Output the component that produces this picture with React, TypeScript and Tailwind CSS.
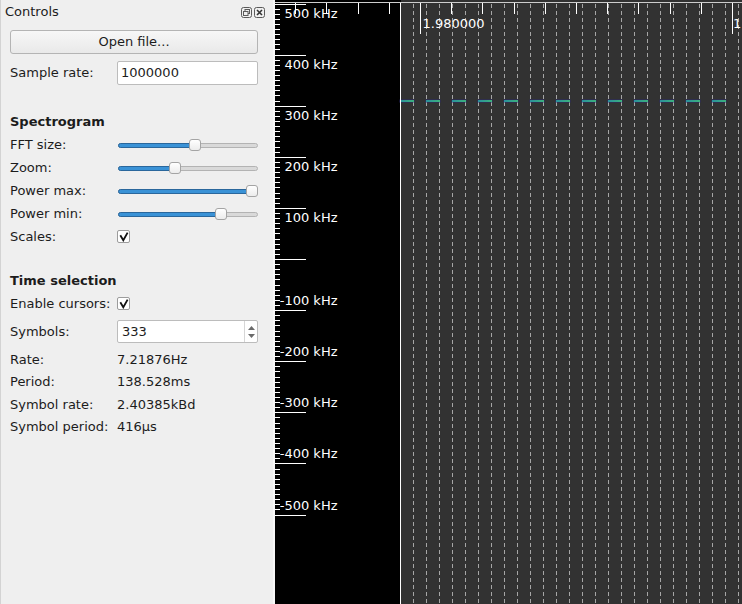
import React from 'react';

// handle centre in px, measured from the left end of the groove
const Slider: React.FC<{ value: number }> = ({ value }) => (
  <div className="relative ml-[1px] h-[12px] w-[140px]">
    <div className="absolute left-0 right-0 top-[4px] h-[5px] rounded-full border border-[#b3b3b3] bg-[#d9d9d9]" />
    <div
      className="absolute left-0 top-[4px] h-[5px] rounded-full border border-[#2a679c] bg-[#3a92d6]"
      style={{ width: value }}
    />
    <div
      className="absolute top-0 h-[12px] w-[12px] rounded-[3px] border border-[#a4a4a4] bg-linear-to-b from-white to-[#ececec]"
      style={{ left: value - 6 }}
    />
  </div>
);

const CheckBox = () => (
  <div className="flex h-[13px] w-[13px] items-center justify-center rounded-[2px] border border-[#9c9c9c] bg-white">
    <svg width="11" height="11" viewBox="0 0 11 11">
      <path d="M2.3 4.2 L5.3 9.3 L9.6 1.6" fill="none" stroke="#111" strokeWidth="1.8" />
    </svg>
  </div>
);

const Row: React.FC<{ label: string; className?: string; children?: React.ReactNode }> = ({
  label,
  className = 'h-[23px]',
  children
}) => (
  <div className={`flex items-center ${className}`}>
    <div className="w-[107px] shrink-0">{label}</div>
    {children}
  </div>
);

const ControlsPanel = () => (
  <div className="flex h-full w-[275px] shrink-0 flex-col border-l border-r-2 border-l-[#d3d3d3] border-r-[#f8f8f8] bg-[#efefef] pl-[9px]">
    <div className="-ml-[5px] flex h-[24px] items-center justify-between pr-[8px]">
      <span>Controls</span>
      <div className="flex gap-[2px]">
        <svg width="11" height="11" viewBox="0 0 11 11">
          <rect x="0.5" y="0.5" width="10" height="10" rx="2" fill="none" stroke="#5a5a5a" />
          <rect x="4" y="2.5" width="4.5" height="4" fill="none" stroke="#5a5a5a" />
          <rect x="2.5" y="4.5" width="4.5" height="4" fill="#efefef" stroke="#5a5a5a" />
        </svg>
        <svg width="11" height="11" viewBox="0 0 11 11">
          <rect x="0.5" y="0.5" width="10" height="10" rx="2" fill="none" stroke="#5a5a5a" />
          <path d="M3 3 L8 8 M8 3 L3 8" stroke="#333" strokeWidth="1.6" />
        </svg>
      </div>
    </div>

    <button className="mt-[6px] h-[24px] w-[248px] rounded-[3px] border border-[#b4b4b4] bg-linear-to-b from-[#f7f7f7] to-[#e9e9e9] text-[#1c1c1c]">
      Open file...
    </button>

    <Row label="Sample rate:" className="mt-[7px] h-[24px]">
      <div className="flex h-[24px] w-[141px] items-center rounded-[2px] border border-[#bcbcbc] bg-white pl-[3px]">
        1000000
      </div>
    </Row>

    <div className="mt-[25px] flex h-[23px] items-center font-bold">Spectrogram</div>
    <Row label="FFT size:"><Slider value={77} /></Row>
    <Row label="Zoom:"><Slider value={57} /></Row>
    <Row label="Power max:"><Slider value={134} /></Row>
    <Row label="Power min:"><Slider value={103} /></Row>
    <Row label="Scales:"><CheckBox /></Row>

    <div className="mt-[21px] flex h-[23px] items-center font-bold">Time selection</div>
    <Row label="Enable cursors:"><CheckBox /></Row>
    <Row label="Symbols:" className="mt-[5px] h-[23px]">
      <div className="flex h-[23px] w-[141px] items-center rounded-[2px] border border-[#bcbcbc] bg-white">
        <span className="flex-1 pl-[4px]">333</span>
        <div className="flex h-full w-[13px] flex-col items-center justify-center gap-[4px] border-l border-[#d6d6d6]">
          <svg width="7" height="4" viewBox="0 0 7 4"><path d="M0 4 L3.5 0 L7 4Z" fill="#6a6a6a" /></svg>
          <svg width="7" height="4" viewBox="0 0 7 4"><path d="M0 0 L3.5 4 L7 0Z" fill="#6a6a6a" /></svg>
        </div>
      </div>
    </Row>
    <Row label="Rate:" className="mt-[5px] h-[22.5px]">7.21876Hz</Row>
    <Row label="Period:" className="h-[22.5px]">138.528ms</Row>
    <Row label="Symbol rate:" className="h-[22.5px]">2.40385kBd</Row>
    <Row label="Symbol period:" className="h-[22.5px]">416µs</Row>
  </div>
);

const OX = 275;
const rel = (x: number) => x - OX;
const majorY = (i: number) => 3.5 + 51.1 * i;
const freqs = [500, 400, 300, 200, 100, 0, -100, -200, -300, -400, -500];

const Spectrogram = () => (
  <svg width={467} height={604} className="block shrink-0" fontFamily="DejaVu Sans, sans-serif" fontSize="13">
    <defs>
      <linearGradient id="sig" x1="0" x2="1" y1="0" y2="0">
        <stop offset="0" stopColor="#2a8f9c" />
        <stop offset="1" stopColor="#3cb27c" />
      </linearGradient>
    </defs>
    <rect width={467} height={604} fill="#000" />
    <rect x={rel(401)} width={467} height={604} fill="#323232" />
    <rect y={2} width={467} height={1} fill="#cdcdcd" />

    {/* time cursors */}
    {Array.from({ length: 26 }, (_, k) => (
      <line key={k} x1={rel(413.5 + 13 * k)} x2={rel(413.5 + 13 * k)} y1={4} y2={604}
        stroke="#a6a6a6" strokeDasharray="4 3" />
    ))}

    {/* signal */}
    {Array.from({ length: 13 }, (_, k) => (
      <g key={k}>
        <rect x={rel(399 + 26 * k)} y={99} width={16} height={4} rx={1.5} fill="#2a2a70" opacity={0.45} />
        <rect x={rel(400 + 26 * k)} y={100} width={14} height={2} fill="url(#sig)" />
      </g>
    ))}

    <line x1={rel(400.5)} x2={rel(400.5)} y1={3} y2={604} stroke="#fff" />

    {/* time axis */}
    {Array.from({ length: 15 }, (_, k) => {
      const x = Math.round(420 + 31.2 * (k - 4)) + 0.5;
      const major = (k - 4) % 10 === 0;
      return <line key={k} x1={rel(x)} x2={rel(x)} y1={3} y2={major ? 34 : 14} stroke="#fff" />;
    })}
    <text x={rel(422.5)} y={28} fill="#fff">1.980000</text>
    <text x={rel(733)} y={28} fill="#fff">1</text>

    {/* frequency axis */}
    {Array.from({ length: 101 }, (_, j) => {
      const y = Math.round(3.5 + 5.11 * j) + 0.5;
      return <line key={j} x1={0} x2={5} y1={y} y2={y} stroke="#fff" />;
    })}
    {freqs.map((f, i) => {
      const y = Math.round(majorY(i)) + 0.5;
      return (
        <g key={f}>
          <line x1={0} x2={31} y1={y} y2={y} stroke="#fff" />
          {f !== 0 && (
            <text x={rel(337.5)} y={f > 0 ? y + 13 : y - 6} fill="#fff" textAnchor="end">
              {f} kHz
            </text>
          )}
        </g>
      );
    })}
  </svg>
);

export default function App() {
  return (
    <div className="flex h-[604px] w-[742px] overflow-hidden bg-[#efefef] font-['DejaVu_Sans',sans-serif] text-[13px] text-[#1c1c1c]">
      <ControlsPanel />
      <Spectrogram />
    </div>
  );
}
